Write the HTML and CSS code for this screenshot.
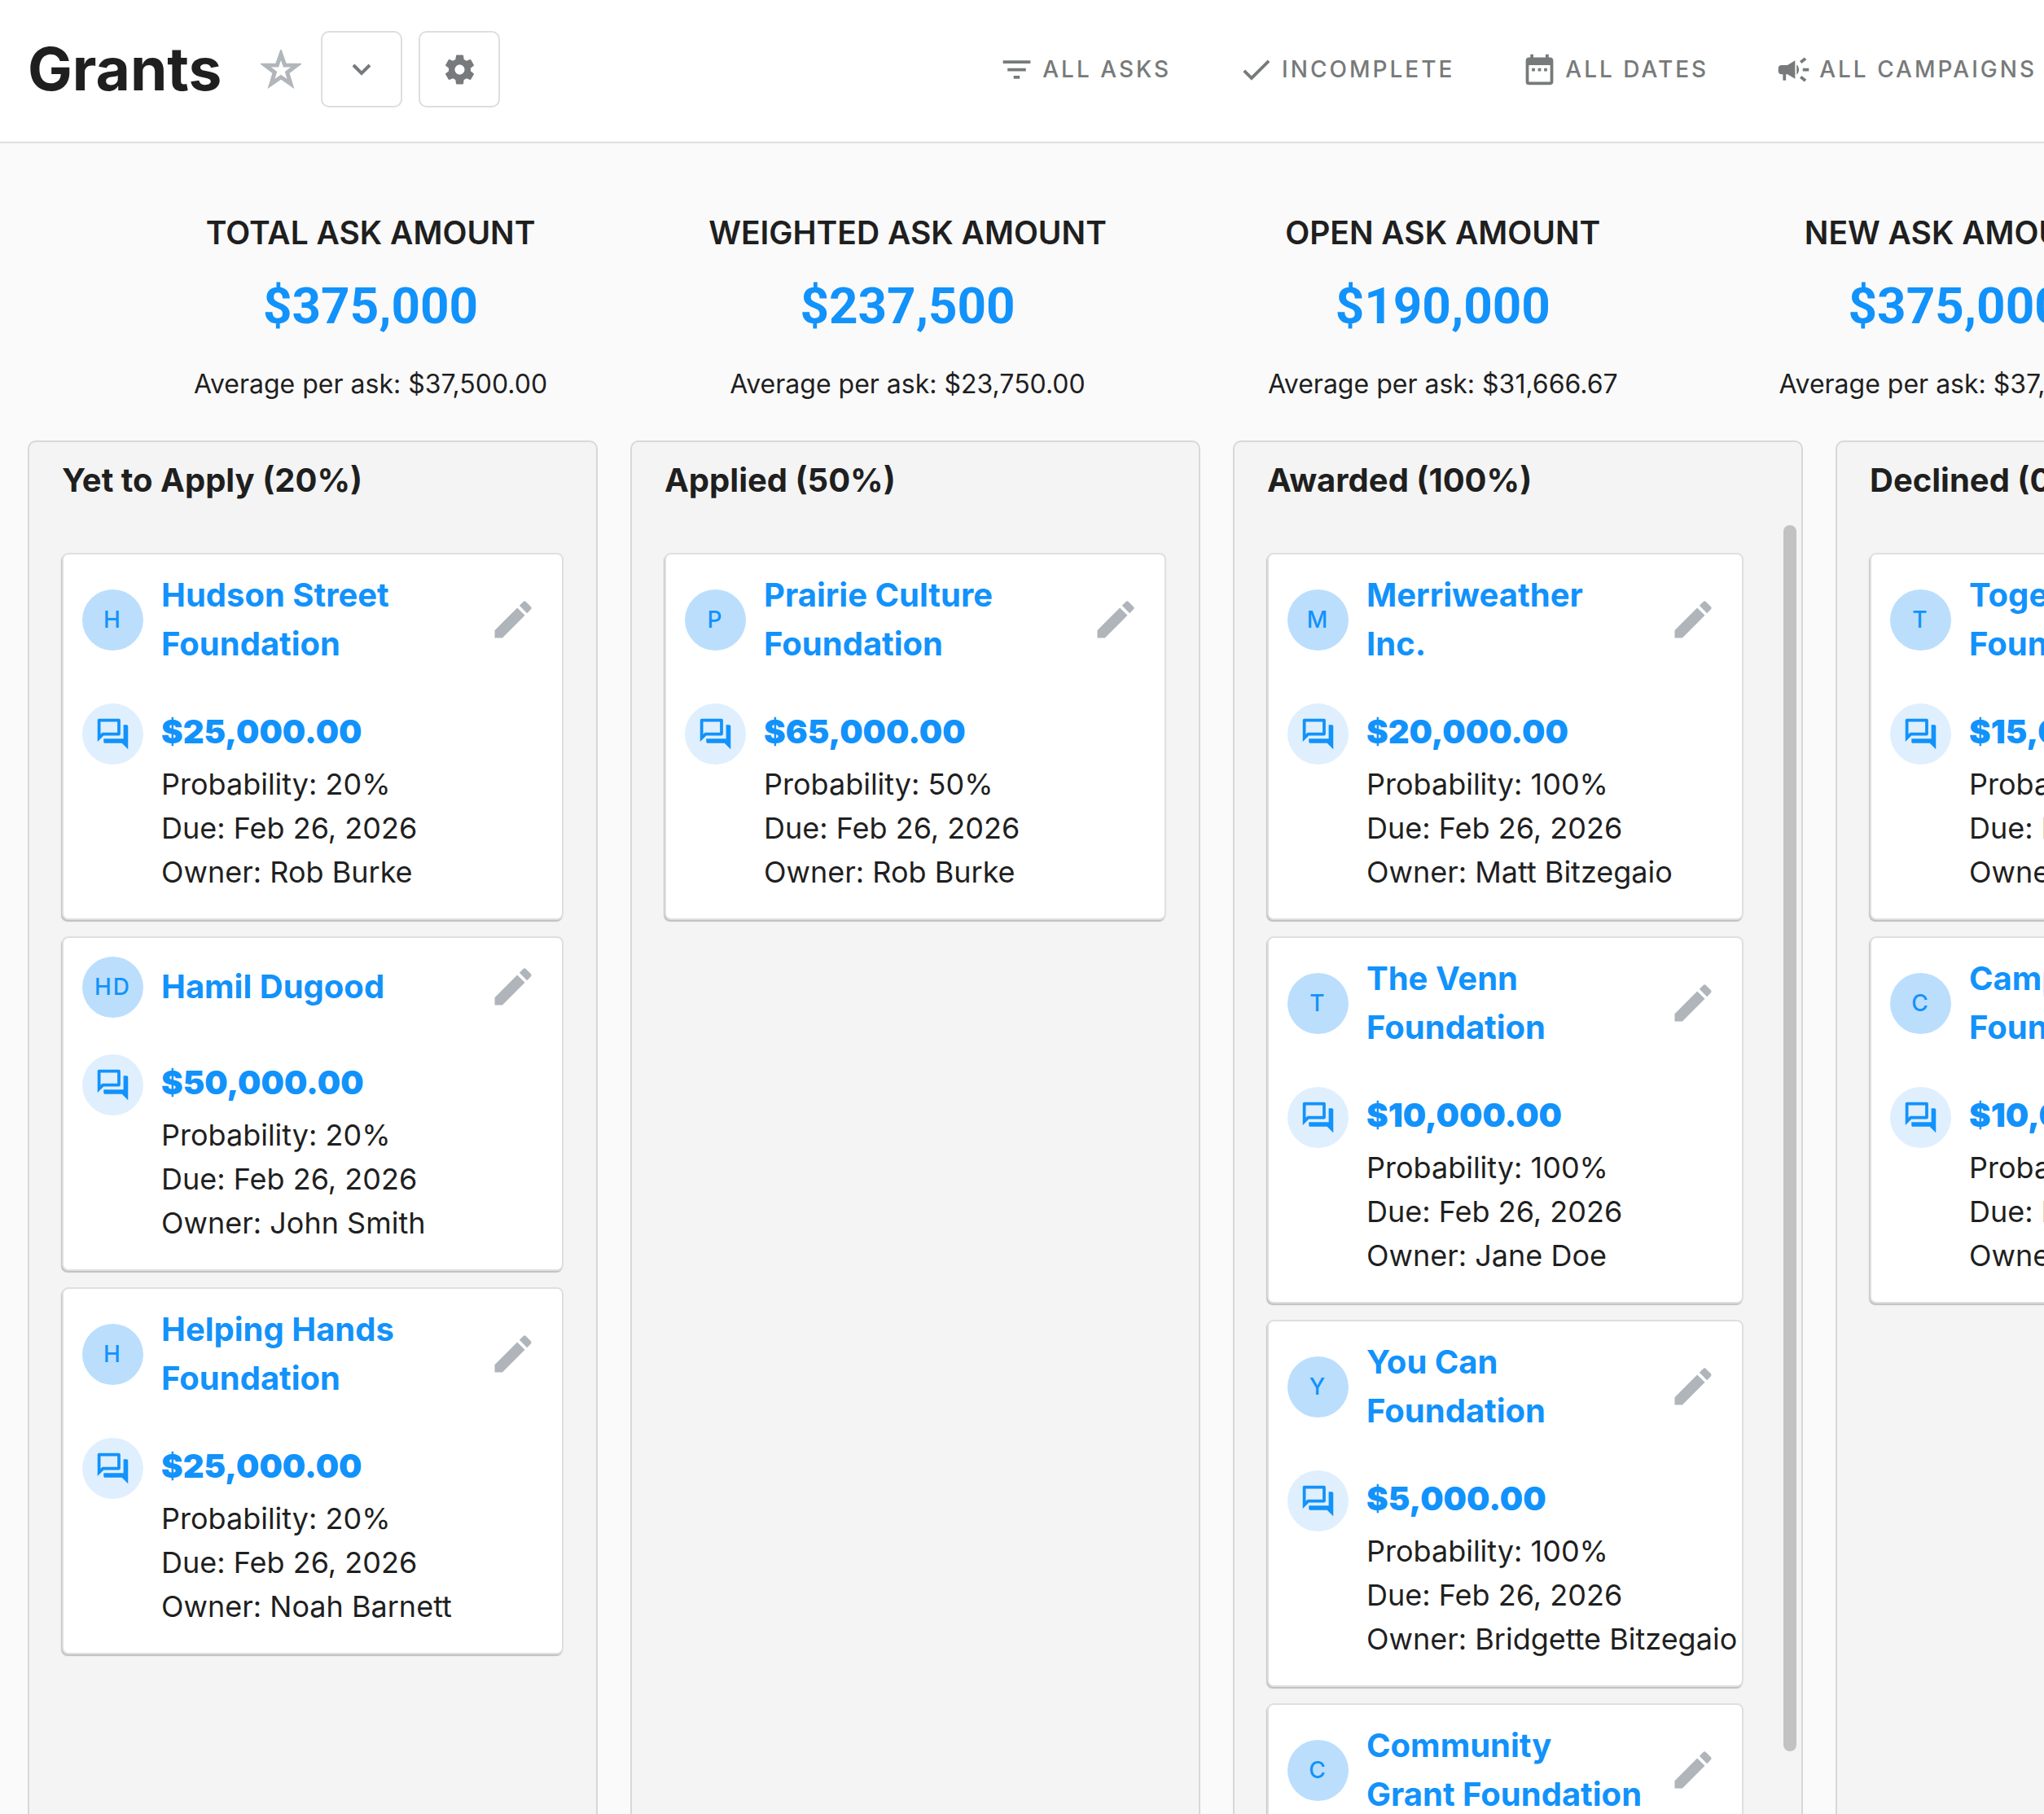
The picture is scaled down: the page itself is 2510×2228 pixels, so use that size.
FILE: index.html
```html
<!DOCTYPE html>
<html lang="en">
<head>
<meta charset="utf-8">
<title>Grants</title>
<link rel="stylesheet" href="styles.css">
</head>
<body>
<svg class="sprite" aria-hidden="true">
  <symbol id="edit" viewBox="0 0 24 24"><path d="M3 17.25V21h3.75L17.81 9.94l-3.75-3.75L3 17.25zM20.71 7.04a1 1 0 0 0 0-1.41l-2.34-2.34a1 1 0 0 0-1.41 0l-1.83 1.83 3.75 3.75 1.83-1.83z"/></symbol>
  <symbol id="chat" viewBox="0 0 24 24"><path d="M15 4v7H5.17L4 12.17V4h11m1-2H3c-.55 0-1 .45-1 1v14l4-4h10c.55 0 1-.45 1-1V3c0-.55-.45-1-1-1zm5 4h-2v9H6v2c0 .55.45 1 1 1h11l4 4V7c0-.55-.45-1-1-1z"/></symbol>
</svg>

<header class="topbar">
  <h1 class="title">Grants</h1>
  <button class="star" aria-label="Favorite"><svg viewBox="0 0 50 48"><path d="M25 5.500 29.700 18.900 44.500 19.100 32.700 28 37 42 25 33.700 13 42 17.300 28 5.500 19.100 20.300 18.900z"/></svg></button>
  <button class="tool" aria-label="More views"><svg class="chevron" viewBox="0 0 24 16"><path d="m2 3 10 10L22 3"/></svg></button>
  <button class="tool" aria-label="Settings"><svg class="icon" viewBox="0 0 24 24"><path d="M19.140 12.940c.040-.300.060-.610.060-.940 0-.320-.020-.640-.070-.940l2.030-1.580c.180-.140.230-.410.120-.610l-1.920-3.320c-.120-.220-.370-.290-.590-.220l-2.390.960c-.500-.380-1.030-.700-1.620-.940l-.360-2.540c-.040-.240-.240-.410-.480-.410h-3.840c-.240 0-.430.170-.470.410l-.360 2.540c-.590.240-1.130.570-1.620.940l-2.390-.960c-.220-.080-.470 0-.590.220L2.740 8.870c-.120.210-.080.470.120.610l2.030 1.580c-.050.300-.090.630-.090.940s.020.640.070.940l-2.030 1.580c-.180.140-.230.410-.120.610l1.920 3.320c.120.220.370.290.590.220l2.390-.960c.500.380 1.030.700 1.620.940l.360 2.540c.050.240.240.410.480.410h3.840c.240 0 .440-.170.470-.410l.360-2.540c.590-.240 1.130-.560 1.620-.940l2.390.960c.220.080.470 0 .590-.220l1.920-3.320c.120-.220.070-.470-.120-.610l-2.010-1.580zM12 15.200c-1.770 0-3.200-1.430-3.200-3.200s1.430-3.200 3.200-3.200 3.200 1.430 3.200 3.200-1.430 3.200-3.200 3.200z"/></svg></button>
  <nav class="filters">
    <button class="filter"><svg class="icon" viewBox="0 0 24 24"><path d="M10 18h4v-2h-4v2zM3 6v2h18V6H3zm3 7h12v-2H6v2z"/></svg>ALL ASKS</button>
    <button class="filter"><svg class="icon" viewBox="0 0 24 24"><path d="M9 16.170 4.830 12l-1.420 1.410L9 19 21 7l-1.410-1.410z"/></svg>INCOMPLETE</button>
    <button class="filter"><svg class="icon" viewBox="0 0 24 24"><path d="M9 11H7v2h2v-2zm4 0h-2v2h2v-2zm4 0h-2v2h2v-2zm2-7h-1V2h-2v2H8V2H6v2H5c-1.110 0-1.990.9-1.990 2L3 20a2 2 0 0 0 2 2h14c1.100 0 2-.9 2-2V6c0-1.100-.9-2-2-2zm0 16H5V9h14v11z"/></svg>ALL DATES</button>
    <button class="filter"><svg class="icon" viewBox="0 0 24 24"><path d="M18 11v2h4v-2h-4zm-2 6.610c.960.710 2.210 1.650 3.200 2.390.400-.530.800-1.070 1.200-1.600-.990-.740-2.240-1.680-3.200-2.400-.400.540-.800 1.080-1.200 1.610zM20.400 5.600c-.400-.530-.800-1.070-1.200-1.600-.990.740-2.240 1.680-3.200 2.400.400.530.800 1.070 1.200 1.600.960-.720 2.210-1.650 3.200-2.400zM4 9c-1.100 0-2 .9-2 2v2c0 1.100.9 2 2 2h1v4h2v-4h1l5 3V6L8 9H4zm11.500 3c0-1.330-.580-2.530-1.500-3.350v6.690c.920-.810 1.500-2.010 1.500-3.340z"/></svg>ALL CAMPAIGNS</button>
  </nav>
</header>

<main>
  <section class="metrics">
    <div class="metric"><h2>TOTAL ASK AMOUNT</h2><strong>$375,000</strong><p>Average per ask: $37,500.00</p></div>
    <div class="metric"><h2>WEIGHTED ASK AMOUNT</h2><strong>$237,500</strong><p>Average per ask: $23,750.00</p></div>
    <div class="metric"><h2>OPEN ASK AMOUNT</h2><strong>$190,000</strong><p>Average per ask: $31,666.67</p></div>
    <div class="metric"><h2>NEW ASK AMOUNT</h2><strong>$375,000</strong><p>Average per ask: $37,500.00</p></div>
  </section>

  <section class="board">
    <section class="column">
      <h2 class="column-title">Yet to Apply (20%)</h2>
      <div class="cards">
        <article class="card">
          <div class="who"><span class="badge">H</span><a class="name" href="#">Hudson Street Foundation</a><button class="edit" aria-label="Edit"><svg><use href="#edit"/></svg></button></div>
          <div class="ask"><span class="badge talk"><svg class="icon"><use href="#chat"/></svg></span><div><a class="amount" href="#">$25,000.00</a><p>Probability: 20%</p><p>Due: Feb 26, 2026</p><p>Owner: Rob Burke</p></div></div>
        </article>
        <article class="card">
          <div class="who"><span class="badge">HD</span><a class="name" href="#">Hamil Dugood</a><button class="edit" aria-label="Edit"><svg><use href="#edit"/></svg></button></div>
          <div class="ask"><span class="badge talk"><svg class="icon"><use href="#chat"/></svg></span><div><a class="amount" href="#">$50,000.00</a><p>Probability: 20%</p><p>Due: Feb 26, 2026</p><p>Owner: John Smith</p></div></div>
        </article>
        <article class="card">
          <div class="who"><span class="badge">H</span><a class="name" href="#">Helping Hands Foundation</a><button class="edit" aria-label="Edit"><svg><use href="#edit"/></svg></button></div>
          <div class="ask"><span class="badge talk"><svg class="icon"><use href="#chat"/></svg></span><div><a class="amount" href="#">$25,000.00</a><p>Probability: 20%</p><p>Due: Feb 26, 2026</p><p>Owner: Noah Barnett</p></div></div>
        </article>
      </div>
    </section>

    <section class="column">
      <h2 class="column-title">Applied (50%)</h2>
      <div class="cards">
        <article class="card">
          <div class="who"><span class="badge">P</span><a class="name" href="#">Prairie Culture Foundation</a><button class="edit" aria-label="Edit"><svg><use href="#edit"/></svg></button></div>
          <div class="ask"><span class="badge talk"><svg class="icon"><use href="#chat"/></svg></span><div><a class="amount" href="#">$65,000.00</a><p>Probability: 50%</p><p>Due: Feb 26, 2026</p><p>Owner: Rob Burke</p></div></div>
        </article>
      </div>
    </section>

    <section class="column">
      <h2 class="column-title">Awarded (100%)</h2>
      <div class="scroller">
        <div class="cards">
          <article class="card">
            <div class="who"><span class="badge">M</span><a class="name" href="#">Merriweather<br>Inc.</a><button class="edit" aria-label="Edit"><svg><use href="#edit"/></svg></button></div>
            <div class="ask"><span class="badge talk"><svg class="icon"><use href="#chat"/></svg></span><div><a class="amount" href="#">$20,000.00</a><p>Probability: 100%</p><p>Due: Feb 26, 2026</p><p>Owner: Matt Bitzegaio</p></div></div>
          </article>
          <article class="card">
            <div class="who"><span class="badge">T</span><a class="name" href="#">The Venn Foundation</a><button class="edit" aria-label="Edit"><svg><use href="#edit"/></svg></button></div>
            <div class="ask"><span class="badge talk"><svg class="icon"><use href="#chat"/></svg></span><div><a class="amount" href="#">$10,000.00</a><p>Probability: 100%</p><p>Due: Feb 26, 2026</p><p>Owner: Jane Doe</p></div></div>
          </article>
          <article class="card">
            <div class="who"><span class="badge">Y</span><a class="name" href="#">You Can<br>Foundation</a><button class="edit" aria-label="Edit"><svg><use href="#edit"/></svg></button></div>
            <div class="ask"><span class="badge talk"><svg class="icon"><use href="#chat"/></svg></span><div><a class="amount" href="#">$5,000.00</a><p>Probability: 100%</p><p>Due: Feb 26, 2026</p><p>Owner: Bridgette Bitzegaio</p></div></div>
          </article>
          <article class="card">
            <div class="who"><span class="badge">C</span><a class="name" href="#">Community<br>Grant Foundation</a><button class="edit" aria-label="Edit"><svg><use href="#edit"/></svg></button></div>
          </article>
        </div>
        <div class="thumb"></div>
      </div>
    </section>

    <section class="column">
      <h2 class="column-title">Declined (0%)</h2>
      <div class="cards">
        <article class="card">
          <div class="who"><span class="badge">T</span><a class="name" href="#">Together<br>Foundation</a><button class="edit" aria-label="Edit"><svg><use href="#edit"/></svg></button></div>
          <div class="ask"><span class="badge talk"><svg class="icon"><use href="#chat"/></svg></span><div><a class="amount" href="#">$15,000.00</a><p>Probability: 0%</p><p>Due: Feb 26, 2026</p><p>Owner: Rob Burke</p></div></div>
        </article>
        <article class="card">
          <div class="who"><span class="badge">C</span><a class="name" href="#">Campus<br>Foundation</a><button class="edit" aria-label="Edit"><svg><use href="#edit"/></svg></button></div>
          <div class="ask"><span class="badge talk"><svg class="icon"><use href="#chat"/></svg></span><div><a class="amount" href="#">$10,000.00</a><p>Probability: 0%</p><p>Due: Feb 26, 2026</p><p>Owner: Rob Burke</p></div></div>
        </article>
      </div>
    </section>
  </section>
</main>
</body>
</html>
```

FILE: styles.css
```css
* { box-sizing: border-box; }
body {
  margin: 0;
  height: 100vh;
  overflow: hidden;
  background: #fafafa;
  color: #1f1f1f;
  font-family: Inter, "Liberation Sans", sans-serif;
}
h1, h2, p { margin: 0; }
button {
  padding: 0;
  border: 0;
  background: none;
  color: inherit;
  font: inherit;
  cursor: pointer;
}
a { color: #1292fb; text-decoration: none; }
svg { display: block; fill: currentColor; }
.sprite { display: none; }
.icon { width: 45px; height: 45px; flex: none; }

.topbar {
  display: flex;
  align-items: center;
  gap: 20px;
  padding: 38px 9px 42px 34px;
  background: #fff;
  border-bottom: 2px solid #dedede;
}
.title { font-size: 73px; line-height: 84px; font-weight: 700; margin-right: 28px; }
.star { width: 50px; margin-right: 4px; color: #b0b6ba; }
.star svg { fill: none; stroke: currentColor; stroke-width: 5; }
.tool {
  display: flex;
  align-items: center;
  justify-content: center;
  width: 100px;
  height: 94px;
  border: 2px solid #dedede;
  border-radius: 10px;
  color: #777a7c;
}
.chevron { width: 24px; height: 16px; fill: none; stroke: currentColor; stroke-width: 4; }
.filters { display: flex; gap: 82px; margin-left: auto; }
.filter {
  display: flex;
  align-items: center;
  gap: 9px;
  color: #777a7a;
  font-size: 28px;
  font-weight: 500;
  letter-spacing: 3px;
  white-space: nowrap;
}

.metrics {
  display: flex;
  gap: 198px;
  padding: 80px 0 45px 238px;
}
.metric {
  display: flex;
  flex: none;
  flex-direction: column;
  align-items: center;
  white-space: nowrap;
}
.metric h2 { font-size: 39px; line-height: 60px; font-weight: 600; }
.metric strong {
  margin: 24px 0 36px;
  color: #1292fb;
  font: 700 62px/72px Roboto, sans-serif;
}
.metric p { font-size: 32px; line-height: 48px; }

.board { display: flex; gap: 40px; padding: 0 34px; }
.column {
  flex: none;
  width: 700px;
  min-height: calc(100vh - 400px);
  border: 2px solid #d8d8d8;
  border-radius: 10px;
  background: #f4f4f4;
}
.column-title { padding: 17px 40px 25px; font-size: 40px; line-height: 60px; font-weight: 700; }
.cards {
  display: flex;
  flex: 1;
  flex-direction: column;
  gap: 20px;
  min-width: 0;
  padding: 34px 40px;
}
.scroller { display: flex; padding-right: 6px; }
.scroller .cards { padding-right: 49px; }
.thumb { width: 16px; height: 1506px; border-radius: 8px; background: #c2c2c2; }

.card {
  padding: 20px 30px 30px 23px;
  border: 2px solid #dfdfdf;
  border-radius: 8px;
  background: #fff;
  box-shadow: -1px 2px 1px #bfc1c2;
}
.who { display: flex; align-items: center; min-height: 80px; margin-bottom: 43px; }
.badge {
  display: flex;
  flex: none;
  align-items: center;
  justify-content: center;
  width: 75px;
  height: 75px;
  margin-right: 22px;
  border-radius: 50%;
  background: #bbdefd;
  color: #1292fb;
  font-size: 28px;
  font-weight: 500;
  letter-spacing: 2px;
}
.talk { background: #dfeffd; }
.name { flex: 1; font-size: 40px; line-height: 60px; font-weight: 700; }
.edit { color: #afb5ba; }
.edit svg { width: 60px; height: 60px; }
.ask { display: flex; font-size: 36px; line-height: 54px; white-space: nowrap; }
.ask div { min-width: 0; padding-top: 5px; }
.amount { display: block; margin-bottom: 7px; font-size: 40px; line-height: 60px; font-weight: 900; }
```
